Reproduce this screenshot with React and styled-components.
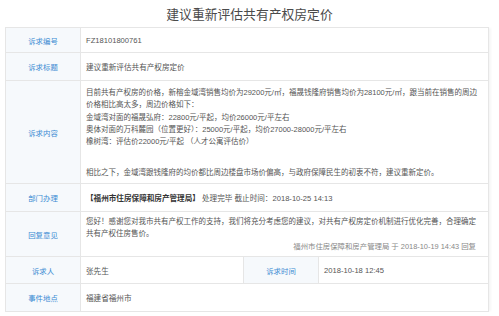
import React from "react";
import styled, { createGlobalStyle } from "styled-components";

const GlobalStyle = createGlobalStyle`
  html, body {
    margin: 0;
    padding: 0;
    background: #ffffff;
  }
  body {
    font-family: "Liberation Sans", "Noto Sans CJK SC", sans-serif;
    color: #555555;
  }
`;

const Page = styled.div`
  width: 499px;
  height: 316px;
  overflow: hidden;
  background: #fff;
`;

const Title = styled.h1`
  margin: 0;
  height: 27px;
  line-height: 27px;
  text-align: center;
  font-size: 12.8px;
  font-weight: normal;
  color: #4a4a4a;
  font-family: "Noto Sans CJK SC", sans-serif;
`;

const Table = styled.div`
  margin-left: 5px;
  width: 484px;
  border: 1px solid #e6e6e6;
  border-bottom: none;
  box-shadow: 3px 0 2px -1px rgba(0, 0, 0, 0.04);
  box-sizing: border-box;
`;

const Row = styled.div`
  display: flex;
  height: ${(p) => p.h || 27}px;
  border-bottom: 1px solid #e6e6e6;
  box-sizing: border-box;
`;

const Label = styled.div`
  flex: 0 0 74px;
  display: flex;
  align-items: center;
  justify-content: center;
  background: #f6f9fc;
  color: #3b8bd3;
  font-size: 7.4px;
  font-family: "Noto Sans CJK SC", sans-serif;
  border-right: 1px solid #e6e6e6;
  ${(p) => p.inner && "border-left: 1px solid #e6e6e6;"}
`;

const Value = styled.div`
  flex: ${(p) => (p.fixed ? `0 0 ${p.fixed}px` : "1 1 auto")};
  min-width: 0;
  display: flex;
  flex-direction: column;
  justify-content: ${(p) => (p.top ? "flex-start" : "center")};
  padding: 0 5px;
  font-size: ${(p) => p.fs || 7.6}px;
  color: #555;
  font-family: "Liberation Sans", "Noto Sans CJK SC", sans-serif;
  box-sizing: border-box;
  white-space: nowrap;
`;

const Para = styled.div`
  margin-top: ${(p) => p.mt || 0}px;
  line-height: 12.3px;
`;

const Dept = styled.span`
  font-weight: bold;
  color: #333;
`;

const Signed = styled.div`
  line-height: 12.3px;
  text-align: right;
  color: #888;
  font-size: 7.4px;
  padding-right: 7px;
`;

export default function App() {
  return (
    <Page>
      <GlobalStyle />
      <Title>建议重新评估共有产权房定价</Title>
      <Table>
        <Row h={25}>
          <Label>诉求编号</Label>
          <Value>FZ18101800761</Value>
        </Row>
        <Row h={28}>
          <Label>诉求标题</Label>
          <Value>建议重新评估共有产权房定价</Value>
        </Row>
        <Row h={103}>
          <Label>诉求内容</Label>
          <Value top fs={7.5}>
            <Para mt={6}>
              目前共有产权房的价格，新榕金域湾销售均价为29200元/㎡，福晟钱隆府销售均价为28100元/㎡，跟当前在销售的周边
              <br />
              价格相比高太多，周边价格如下：
              <br />
              金域湾对面的福晟弘府：22800元/平起，均价26000元/平左右
              <br />
              奥体对面的万科麓园（位置更好）：25000元/平起，均价27000-28000元/平左右
              <br />
              橡树湾：评估价22000元/平起 （人才公寓评估价）
            </Para>
            <Para mt={19}>
              相比之下，金域湾跟钱隆府的均价都比周边楼盘市场价偏高，与政府保障民生的初衷不符，建议重新定价。
            </Para>
          </Value>
        </Row>
        <Row h={28}>
          <Label>部门办理</Label>
          <Value>
            <div>
              <Dept>【福州市住房保障和房产管理局】</Dept> 处理完毕 截止时间：2018-10-25 14:13
            </div>
          </Value>
        </Row>
        <Row h={45}>
          <Label>回复意见</Label>
          <Value top fs={7.5}>
            <Para mt={4}>
              您好！感谢您对我市共有产权工作的支持，我们将充分考虑您的建议，对共有产权房定价机制进行优化完善，合理确定
              <br />
              共有产权住房售价。
            </Para>
            <Signed>福州市住房保障和房产管理局 于 2018-10-19 14:43 回复</Signed>
          </Value>
        </Row>
        <Row h={27}>
          <Label>诉求人</Label>
          <Value fixed={162}>张先生</Value>
          <Label inner>诉求时间</Label>
          <Value>2018-10-18 12:45</Value>
        </Row>
        <Row h={28}>
          <Label>事件地点</Label>
          <Value>福建省福州市</Value>
        </Row>
      </Table>
    </Page>
  );
}
